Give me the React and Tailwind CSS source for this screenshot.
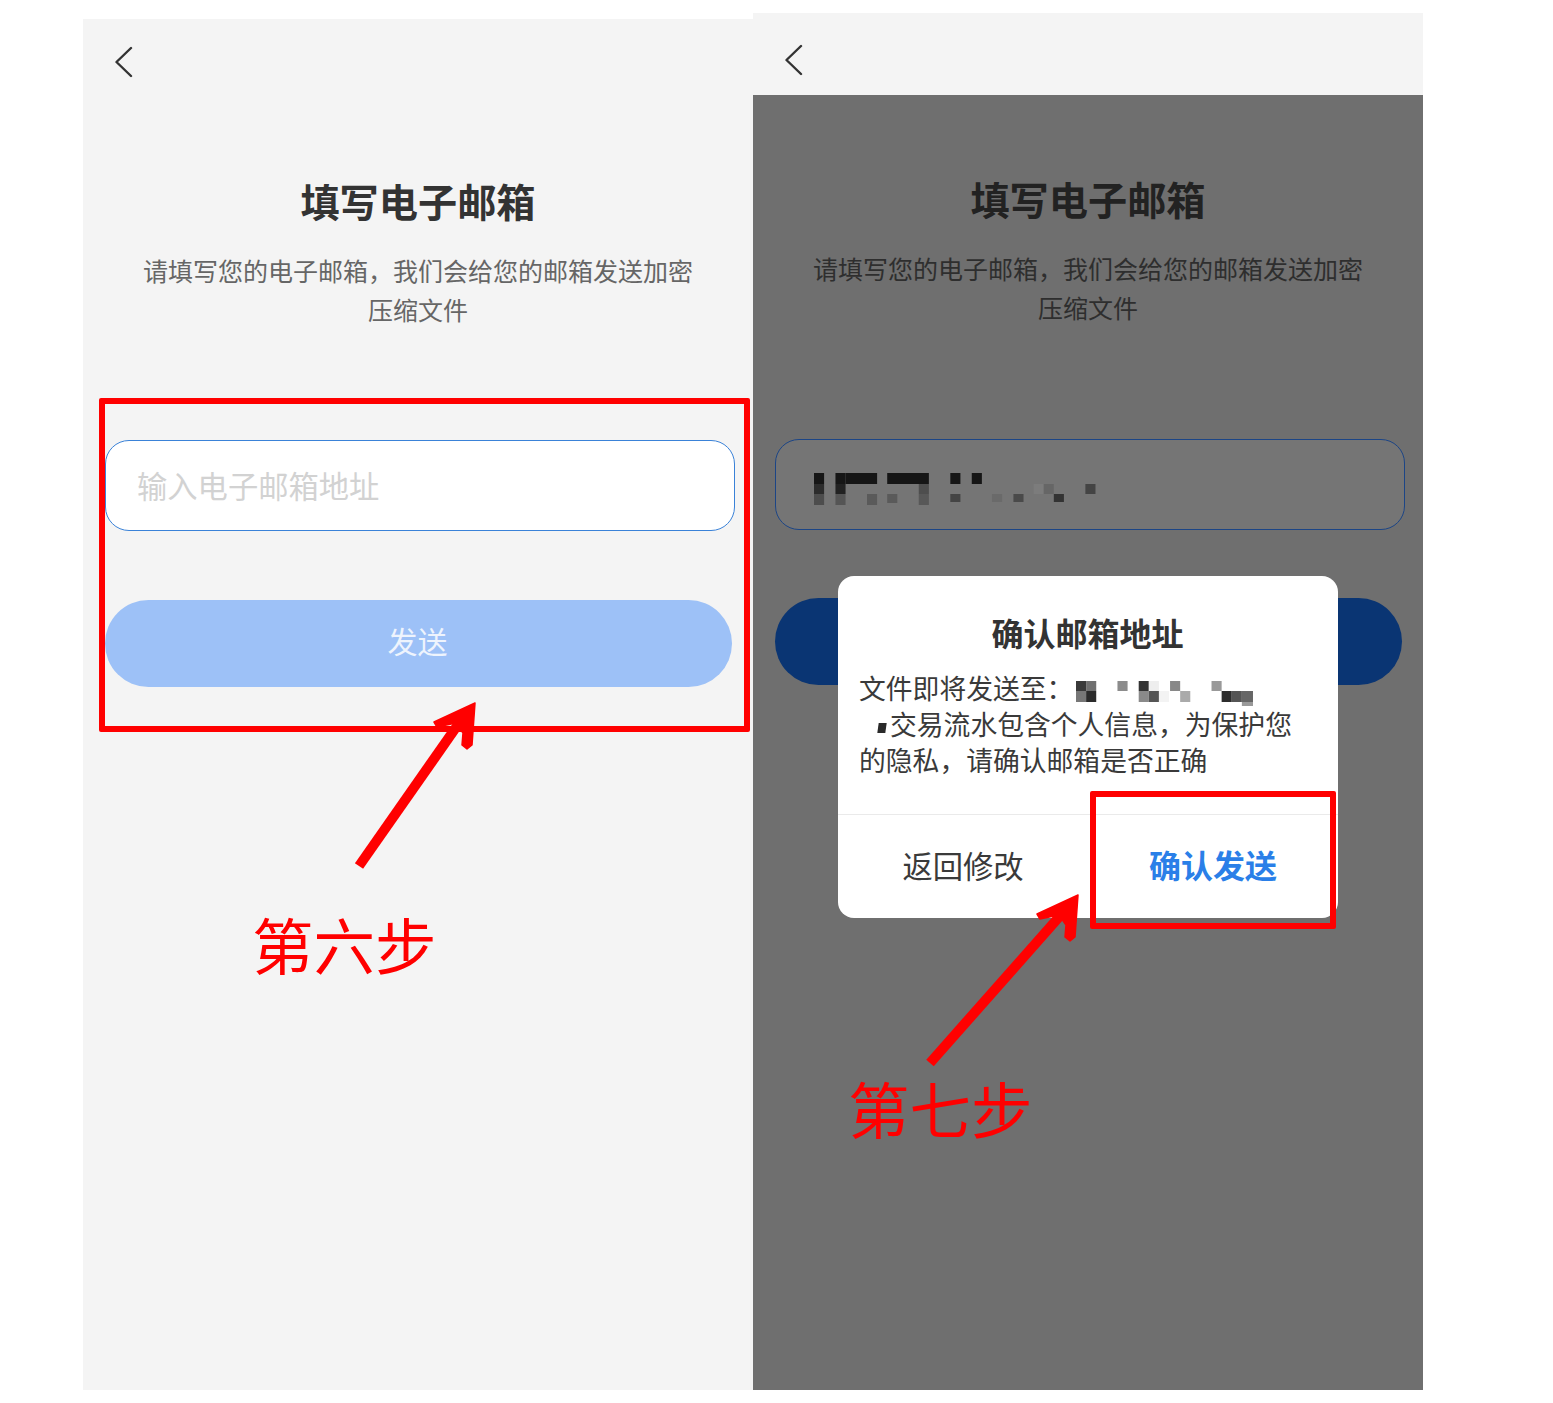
import React from 'react';

const inputMosaic = [
  [0, 0, 8, 11, '#161616'], [0, 11, 8, 10, '#2c2c2c'], [0, 21, 8, 11, '#4d4d4d'],
  [17, 0, 8, 11, '#161616'], [17, 11, 8, 10, '#222'], [17, 21, 8, 11, '#555'],
  [25, 0, 25, 11, '#161616'], [42, 21, 8, 11, '#5a5a5a'],
  [58, 0, 33, 11, '#161616'], [58, 21, 8, 9, '#5a5a5a'],
  [83, 11, 8, 10, '#4e4e4e'], [83, 21, 8, 11, '#585858'],
  [108, 0, 8, 11, '#161616'], [108, 21, 8, 8, '#444'], [125, 0, 8, 11, '#161616'],
  [141, 21, 8, 8, '#6a6a6a'], [158, 21, 8, 8, '#4a4a4a'],
  [174, 11, 8, 10, '#7c7c7c'], [182, 11, 8, 10, '#666'], [190, 21, 8, 8, '#333'],
  [215, 11, 8, 10, '#444'],
];

const dialogMosaic = [
  [0, 0, 10, 10, '#3a3a3a'], [10, 0, 10, 10, '#707070'], [0, 10, 10, 11, '#777'], [10, 10, 10, 11, '#2b2b2b'],
  [41, 0, 10, 10, '#8c8c8c'],
  [62, 0, 10, 10, '#333'], [72, 0, 10, 10, '#eee'], [62, 10, 10, 11, '#8a8a8a'], [72, 10, 10, 11, '#555'], [82, 10, 10, 11, '#f3f3f3'],
  [93, 0, 10, 10, '#888'], [103, 10, 10, 11, '#aaa'],
  [134, 0, 10, 10, '#999'], [144, 10, 10, 11, '#2d2d2d'], [154, 10, 10, 11, '#555'], [164, 10, 11, 11, '#666'], [164, 21, 11, 4, '#999'],
];

// viewW is the width the cells were measured in, width stretches them to the real size
const Mosaic = ({ cells, viewW, width, height, className }) => (
  <svg width={width} height={height} viewBox={`0 0 ${viewW} ${height}`} preserveAspectRatio="none" className={className}>
    {cells.map(([x, y, w, h, fill], i) => (
      <rect key={i} x={x} y={y} width={w} height={h} fill={fill} />
    ))}
  </svg>
);

const BackIcon = () => (
  <svg width="20" height="32" viewBox="0 0 20 32" fill="none" stroke="#333" strokeWidth="2.4" strokeLinecap="round" strokeLinejoin="round">
    <path d="M16 2 L1.5 16 L16 30" />
  </svg>
);

const Arrow = ({ tail, neck, head }) => (
  <svg width="1553" height="1403" className="absolute left-0 top-0 pointer-events-none">
    <path d={`M${tail} L${neck}`} stroke="#ff0000" strokeWidth="10" fill="none" />
    <polygon points={head} fill="#ff0000" stroke="#ff0000" strokeWidth="1.5" strokeLinejoin="round" />
  </svg>
);

const Screen = ({ dark, children }) => (
  <div className={`flex flex-col items-start ${dark ? 'bg-[#6f6f6f] text-[#222]' : 'text-[#333]'}`}>
    <div className="flex w-full flex-col items-center pt-[80px]">
      <h1 className="text-[39.2px] leading-[46px] font-bold">填写电子邮箱</h1>
      <p className={`mt-[28px] text-center text-[25px] leading-[39px] ${dark ? 'text-[#2e2e2e]' : 'text-[#666]'}`}>
        请填写您的电子邮箱，我们会给您的邮箱发送加密
        <br />
        压缩文件
      </p>
    </div>
    {children}
  </div>
);

export default function App() {
  return (
    <div className="relative h-[1403px] w-[1553px] overflow-hidden bg-white font-['Noto_Sans_CJK_SC','Noto_Sans',sans-serif]">
      <div className="flex pl-[83px]">
        {/* left phone */}
        <div className="mt-[19px] h-[1371px] w-[670px] bg-[#f4f4f4]">
          <div className="flex h-[78px] items-start pl-[32px] pt-[27px]">
            <BackIcon />
          </div>
          <Screen>
            <div className="ml-[22px] mt-[111px] flex h-[91px] w-[630px] items-center rounded-[24px] border-[1.5px] border-[#3a82d8] bg-white pl-[31px] text-[30.3px] text-[#d2d2d2]">
              输入电子邮箱地址
            </div>
            <div className="ml-[22px] mt-[69px] flex h-[87px] w-[627px] items-center justify-center rounded-full bg-[#9dc1f7] pb-[6px] pr-[2px] text-[30px] text-[#eef4fd]">
              发送
            </div>
          </Screen>
        </div>

        {/* right phone, dimmed under the dialog */}
        <div className="mt-[13px] flex h-[1377px] w-[670px] flex-col bg-[#6f6f6f]">
          <div className="flex h-[82px] shrink-0 items-start bg-[#f4f4f4] pl-[32px] pt-[31px]">
            <BackIcon />
          </div>
          <Screen dark>
            <div className="ml-[22px] mt-[112px] flex h-[91px] w-[630px] items-center rounded-[24px] border-[1.5px] border-[#1c4586] bg-[#757575] pl-[38px] pt-[9px]">
              <Mosaic cells={inputMosaic} viewW={225} width={284} height={32} />
            </div>
            <div className="ml-[22px] mt-[68px] h-[87px] w-[627px] rounded-full bg-[#0a3573]" />
          </Screen>
        </div>
      </div>

      {/* dialog */}
      <div className="absolute left-[838px] top-[576px] flex h-[342px] w-[500px] flex-col rounded-[16px] bg-white">
        <div className="flex h-[238px] flex-col pl-[21px] pr-[22px] text-[#3a3a3a]">
          <h2 className="mt-[34px] text-center text-[32px] leading-[44px] font-bold text-[#333]">确认邮箱地址</h2>
          <div className="mt-[15px] text-[26.8px] leading-[36px]">
            <div className="flex items-center">
              <span>文件即将发送至：</span>
              <Mosaic cells={dialogMosaic} viewW={176} width={178} height={26} className="ml-[3px] mt-[12px]" />
            </div>
            <div className="-mt-px flex items-center pl-[19px]">
              <span className="mr-[4px] mt-[8px] h-[10px] w-[8px] skew-x-[-8deg] bg-[#2a2a2a]" />
              <span>交易流水包含个人信息，为保护您</span>
            </div>
            <div>的隐私，请确认邮箱是否正确</div>
          </div>
        </div>
        <div className="flex flex-1 border-t border-[#eaeaea]">
          <div className="flex w-[250px] items-center justify-center pb-[2px] text-[30.3px] text-[#3a3a3a]">返回修改</div>
          <div className="flex w-[250px] items-center justify-center pb-[6px] text-[32px] font-bold text-[#2a7fe8]">确认发送</div>
        </div>
      </div>

      {/* red annotations */}
      <div className="absolute left-[99px] top-[398px] h-[334px] w-[651px] rounded-[2px] border-[6px] border-[#ff0000]" />
      <div className="absolute left-[1090px] top-[791px] h-[138px] w-[246px] rounded-[2px] border-[6px] border-[#ff0000]" />
      <Arrow
        tail="359,866"
        neck="464,716"
        head="475,703 434,722 437,727 456,723 463,733 462,745 467,749 472,745"
      />
      <Arrow
        tail="930,1063"
        neck="1067,908"
        head="1078,895 1037,914 1040,919 1059,915 1066,925 1065,937 1070,941 1075,937"
      />
      <div className="absolute left-[252px] top-[902px] text-[61.5px] leading-[84px] text-[#ff0000]">第六步</div>
      <div className="absolute left-[848px] top-[1066px] text-[61.5px] leading-[84px] text-[#ff0000]">第七步</div>
    </div>
  );
}
